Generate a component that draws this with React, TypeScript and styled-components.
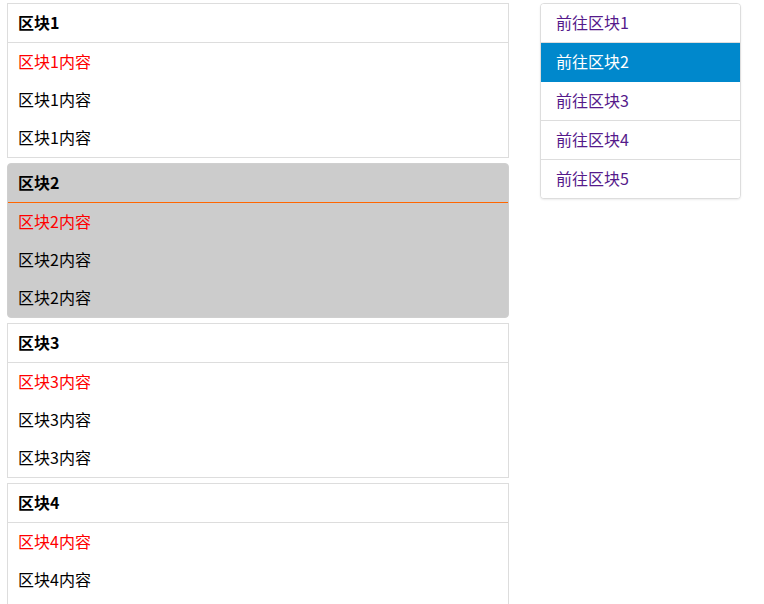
import React from "react";
import styled, { createGlobalStyle } from "styled-components";

const Global = createGlobalStyle`
  html, body { margin: 0; padding: 0; background: #fff; }
  body { font-family: "Noto Sans CJK SC", "Liberation Sans", sans-serif; font-size: 16px; color: #000; }
`;

const Page = styled.div`
  display: flex;
  align-items: flex-start;
  gap: 31px;
  padding: 3px 0 0 7px;
`;

const Column = styled.div`
  width: 502px;
  display: flex;
  flex-direction: column;
  gap: 5px;
`;

const Panel = styled.section<{ $active?: boolean }>`
  border: 1px solid ${(p) => (p.$active ? "#cfcfcf" : "#ddd")};
  border-radius: ${(p) => (p.$active ? "4px" : "0")};
  background: ${(p) => (p.$active ? "#ccc" : "#fff")};
`;

const Header = styled.div<{ $active?: boolean }>`
  height: 36px;
  line-height: 36px;
  padding: 0 10px 2px;
  font-weight: bold;
  border-bottom: 1px solid ${(p) => (p.$active ? "#f60" : "#ddd")};
`;

const Item = styled.div<{ $first?: boolean }>`
  height: 36px;
  line-height: 36px;
  padding: 0 10px 2px;
  color: ${(p) => (p.$first ? "#f00" : "#000")};
`;

const Nav = styled.nav`
  width: 199px;
  border: 1px solid #ddd;
  border-radius: 4px;
  box-shadow: 0 1px 2px rgba(0, 0, 0, 0.08);
  background: #fff;
  overflow: hidden;
`;

const NavItem = styled.a<{ $active?: boolean; $last?: boolean }>`
  display: block;
  height: 36px;
  line-height: 36px;
  padding: 0 15px 2px;
  text-decoration: none;
  color: ${(p) => (p.$active ? "#fff" : "#551a8b")};
  background: ${(p) => (p.$active ? "#0088cc" : "#fff")};
  border-bottom: ${(p) => (p.$last ? "none" : `1px solid ${p.$active ? "#0088cc" : "#ddd"}`)};
`;

const blocks = [1, 2, 3, 4, 5];

export default function App() {
  return (
    <>
      <Global />
      <Page>
        <Column>
          {blocks.map((n) => (
            <Panel key={n} $active={n === 2} id={`block${n}`}>
              <Header $active={n === 2}>区块{n}</Header>
              <Item $first>区块{n}内容</Item>
              <Item>区块{n}内容</Item>
              <Item>区块{n}内容</Item>
            </Panel>
          ))}
        </Column>
        <Nav>
          {blocks.map((n) => (
            <NavItem key={n} href={`#block${n}`} $active={n === 2} $last={n === 5}>
              前往区块{n}
            </NavItem>
          ))}
        </Nav>
      </Page>
    </>
  );
}
